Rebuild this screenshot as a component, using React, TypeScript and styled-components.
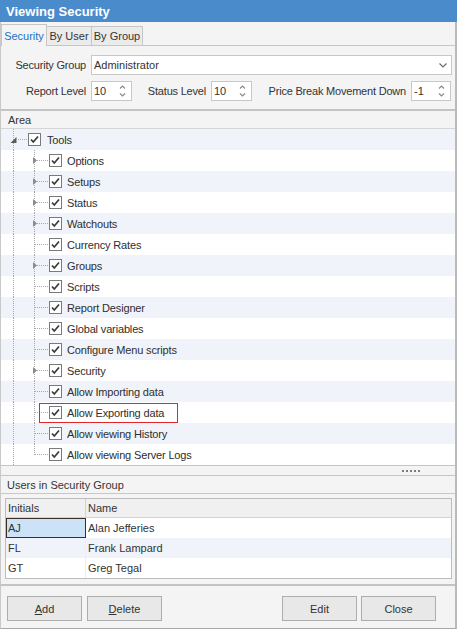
import React from "react";
import styled, { createGlobalStyle } from "styled-components";

const GlobalStyle = createGlobalStyle`
  html, body { margin: 0; padding: 0; background: #ffffff; }
  body { font-family: "Liberation Sans", Arial, sans-serif; font-size: 11px; color: #333333; }
  * { box-sizing: border-box; }
`;

const Window = styled.div`
  width: 457px;
  height: 629px;
  display: flex;
  flex-direction: column;
  background: #f4f4f4;
  overflow: hidden;
`;

const TitleBar = styled.div`
  height: 22px;
  flex: none;
  background: #4a8bcb;
  color: #ffffff;
  font-weight: bold;
  font-size: 13px;
  display: flex;
  align-items: center;
  padding-left: 6px;
`;

const Body = styled.div`
  flex: 1;
  min-height: 0;
  display: flex;
  flex-direction: column;
  border-left: 1px solid #c9c9c9;
  border-right: 2px solid #bababa;
  border-bottom: 1px solid #a8a8a8;
`;

const TabStrip = styled.div`
  height: 23px;
  flex: none;
  display: flex;
  align-items: flex-end;
`;

const Tab = styled.div<{ $active?: boolean; $w: number }>`
  width: ${(p) => p.$w}px;
  height: ${(p) => (p.$active ? 22 : 19)}px;
  margin-bottom: ${(p) => (p.$active ? -1 : 0)}px;
  display: flex;
  align-items: center;
  justify-content: center;
  border: 1px solid #c6c6c6;
  border-bottom: none;
  border-left: ${(p) => (p.$active ? "1px solid #c6c6c6" : "none")};
  background: ${(p) => (p.$active ? "#f4f4f4" : "#ebebeb")};
  color: ${(p) => (p.$active ? "#1f70c4" : "#333333")};
  position: relative;
  z-index: 1;
  white-space: nowrap;
`;

const FormPanel = styled.div`
  height: 64px;
  flex: none;
  border-top: 1px solid #c6c6c6;
  padding-top: 9px;
  display: flex;
  flex-direction: column;
  gap: 6px;
`;

const FormRow = styled.div`
  height: 20px;
  display: flex;
  align-items: center;
  padding-right: 3px;
`;

const FieldLabel = styled.div<{ $w: number }>`
  width: ${(p) => p.$w}px;
  text-align: right;
  margin-right: 5px;
  white-space: nowrap;
  flex: none;
  letter-spacing: -0.2px;
`;

const Select = styled.div`
  flex: 1;
  height: 20px;
  background: #ffffff;
  border: 1px solid #c8c8c8;
  display: flex;
  align-items: center;
  justify-content: space-between;
  padding: 0 4px 0 2px;
`;

const SpinBox = styled.div<{ $w: number }>`
  width: ${(p) => p.$w}px;
  height: 20px;
  flex: none;
  background: #ffffff;
  border: 1px solid #c8c8c8;
  display: flex;
  align-items: center;
`;

const SpinText = styled.div`
  flex: 1;
  padding-left: 2px;
`;

const SpinButtons = styled.div`
  width: 17px;
  height: 100%;
  display: flex;
  align-items: center;
  justify-content: center;
`;

const TreeBox = styled.div`
  flex: none;
  border-top: 2px solid #c4c4c4;
  background: #ffffff;
`;

const TreeHeader = styled.div`
  height: 18px;
  background: #f4f4f4;
  border-bottom: 1px solid #d6d6d6;
  padding-left: 7px;
  display: flex;
  align-items: center;
`;

const TreeRow = styled.div<{ $alt?: boolean }>`
  height: 21px;
  display: flex;
  align-items: center;
  position: relative;
  background: ${(p) => (p.$alt ? "#f0f4fa" : "#ffffff")};
`;

const Gutter = styled.svg`
  flex: none;
  display: block;
`;

const CheckBox = styled.span`
  width: 13px;
  height: 13px;
  flex: none;
  border: 1px solid #7a7a7a;
  background: #ffffff;
  display: flex;
  align-items: center;
  justify-content: center;
`;

const TreeLabel = styled.span<{ $gap: number }>`
  margin-left: ${(p) => p.$gap}px;
  white-space: nowrap;
  color: #2e2e2e;
  letter-spacing: -0.15px;
`;

const Highlight = styled.div`
  position: absolute;
  left: 38px;
  top: 1px;
  width: 139px;
  height: 20px;
  border: 1px solid #e3262b;
  pointer-events: none;
`;

const Splitter = styled.div`
  height: 11px;
  flex: none;
  border-top: 1px solid #c4c4c4;
  border-bottom: 1px solid #c4c4c4;
  display: flex;
  align-items: center;
  justify-content: flex-end;
  gap: 2px;
  padding-right: 35px;
`;

const Dot = styled.span`
  width: 2px;
  height: 2px;
  background: #7c7c7c;
`;

const SectionHeader = styled.div`
  height: 18px;
  flex: none;
  border-bottom: 1px solid #c8c8c8;
  padding-left: 6px;
  display: flex;
  align-items: center;
`;

const Grid = styled.div`
  flex: none;
  margin: 4px 3px 0 4px;
  border: 1px solid #bcbcbc;
  background: #ffffff;
  display: grid;
  grid-template-columns: 80px 1fr;
`;

const HeadCell = styled.div<{ $first?: boolean }>`
  height: 19px;
  background: #f0f0f0;
  border-bottom: 1px solid #d2d2d2;
  border-right: ${(p) => (p.$first ? "1px solid #d2d2d2" : "none")};
  display: flex;
  align-items: center;
  padding-left: 2px;
`;

const Cell = styled.div<{ $alt?: boolean; $selected?: boolean; $first?: boolean }>`
  height: 20px;
  display: flex;
  align-items: center;
  background: ${(p) => (p.$selected ? "#cce2f6" : p.$alt ? "#f0f4fa" : "#ffffff")};
  border: ${(p) => (p.$selected ? "1px solid #3b2f25" : "none")};
  border-right: ${(p) => (p.$selected ? "1px solid #3b2f25" : p.$first ? "1px solid #eeeeee" : "none")};
  padding-left: ${(p) => (p.$selected ? 1 : 2)}px;
`;

const ButtonBar = styled.div`
  flex: 1;
  margin-top: 5px;
  border-top: 2px solid #c4c4c4;
  display: flex;
  align-items: flex-start;
  padding: 10px 19px 0 6px;
  gap: 5px;
`;

const Spacer = styled.div`
  flex: 1;
`;

const Button = styled.button<{ $ml?: number }>`
  width: 75px;
  height: 25px;
  margin-left: ${(p) => p.$ml ?? 0}px;
  border: 1px solid #adadad;
  background: #e8e8e8;
  font-family: "Liberation Sans", Arial, sans-serif;
  font-size: 11px;
  color: #333333;
  padding: 0;
  u { text-decoration: underline; }
`;

const Check = () => (
  <CheckBox>
    <svg width="11" height="11" viewBox="0 0 11 11">
      <path d="M2 5.5 L4.3 8 L9 2.5" fill="none" stroke="#3a3a3a" strokeWidth="1.7" />
    </svg>
  </CheckBox>
);

const DOT = { stroke: "#a8a8a8", strokeWidth: 1, strokeDasharray: "1 1", shapeRendering: "crispEdges" as const };

const RootGutter = () => (
  <Gutter width={27} height={21} viewBox="0 0 27 21">
    <line x1={12.5} y1={0} x2={12.5} y2={21} {...DOT} />
    <line x1={17} y1={10.5} x2={27} y2={10.5} {...DOT} />
    <polygon points="15.5,8 15.5,14 9.5,14" fill="#5a5a5a" />
  </Gutter>
);

const ChildGutter = ({ expander, last }: { expander?: boolean; last?: boolean }) => (
  <Gutter width={48} height={21} viewBox="0 0 48 21">
    <line x1={12.5} y1={0} x2={12.5} y2={21} {...DOT} />
    <line x1={33.5} y1={0} x2={33.5} y2={last ? 11 : 21} {...DOT} />
    <line x1={34} y1={10.5} x2={48} y2={10.5} {...DOT} />
    {expander && <polygon points="32,7 36,10.5 32,14" fill="#8c8c8c" />}
  </Gutter>
);

const SpinArrows = () => (
  <svg width="7" height="14" viewBox="0 0 7 14">
    <path d="M1 4.5 L3.5 2 L6 4.5" fill="none" stroke="#8a8a8a" strokeWidth="1.2" />
    <path d="M1 9.5 L3.5 12 L6 9.5" fill="none" stroke="#8a8a8a" strokeWidth="1.2" />
  </svg>
);

const children: { label: string; expander?: boolean }[] = [
  { label: "Options", expander: true },
  { label: "Setups", expander: true },
  { label: "Status", expander: true },
  { label: "Watchouts", expander: true },
  { label: "Currency Rates" },
  { label: "Groups", expander: true },
  { label: "Scripts" },
  { label: "Report Designer" },
  { label: "Global variables" },
  { label: "Configure Menu scripts" },
  { label: "Security", expander: true },
  { label: "Allow Importing data" },
  { label: "Allow Exporting data" },
  { label: "Allow viewing History" },
  { label: "Allow viewing Server Logs" },
];

const users = [
  { initials: "AJ", name: "Alan Jefferies" },
  { initials: "FL", name: "Frank Lampard" },
  { initials: "GT", name: "Greg Tegal" },
];

export default function App() {
  return (
    <>
      <GlobalStyle />
      <Window>
        <TitleBar>Viewing Security</TitleBar>
        <Body>
          <TabStrip>
            <Tab $active $w={46}>Security</Tab>
            <Tab $w={45}>By User</Tab>
            <Tab $w={51}>By Group</Tab>
          </TabStrip>
          <FormPanel>
            <FormRow>
              <FieldLabel $w={85}>Security Group</FieldLabel>
              <Select>
                <span>Administrator</span>
                <svg width="8" height="5" viewBox="0 0 8 5">
                  <path d="M0.5 0.5 L4 4 L7.5 0.5" fill="none" stroke="#6b6b6b" strokeWidth="1.2" />
                </svg>
              </Select>
            </FormRow>
            <FormRow>
              <FieldLabel $w={85}>Report Level</FieldLabel>
              <SpinBox $w={41}>
                <SpinText>10</SpinText>
                <SpinButtons><SpinArrows /></SpinButtons>
              </SpinBox>
              <FieldLabel $w={74}>Status Level</FieldLabel>
              <SpinBox $w={41}>
                <SpinText>10</SpinText>
                <SpinButtons><SpinArrows /></SpinButtons>
              </SpinBox>
              <FieldLabel $w={154}>Price Break Movement Down</FieldLabel>
              <SpinBox $w={40}>
                <SpinText>-1</SpinText>
                <SpinButtons><SpinArrows /></SpinButtons>
              </SpinBox>
            </FormRow>
          </FormPanel>
          <TreeBox>
            <TreeHeader>Area</TreeHeader>
            <TreeRow $alt>
              <RootGutter />
              <Check />
              <TreeLabel $gap={6}>Tools</TreeLabel>
            </TreeRow>
            {children.map((c, i) => (
              <TreeRow key={c.label} $alt={i % 2 === 1}>
                <ChildGutter expander={c.expander} last={i === children.length - 1} />
                <Check />
                <TreeLabel $gap={5}>{c.label}</TreeLabel>
                {c.label === "Allow Exporting data" && <Highlight />}
              </TreeRow>
            ))}
          </TreeBox>
          <Splitter>
            <Dot /><Dot /><Dot /><Dot /><Dot />
          </Splitter>
          <SectionHeader>Users in Security Group</SectionHeader>
          <Grid>
            <HeadCell $first>Initials</HeadCell>
            <HeadCell>Name</HeadCell>
            {users.map((u, i) => (
              <React.Fragment key={u.initials}>
                <Cell $first $alt={i % 2 === 1} $selected={i === 0}>{u.initials}</Cell>
                <Cell $alt={i % 2 === 1}>{u.name}</Cell>
              </React.Fragment>
            ))}
          </Grid>
          <ButtonBar>
            <Button><u>A</u>dd</Button>
            <Button><u>D</u>elete</Button>
            <Spacer />
            <Button>Edit</Button>
            <Button $ml={-1}>Close</Button>
          </ButtonBar>
        </Body>
      </Window>
    </>
  );
}
